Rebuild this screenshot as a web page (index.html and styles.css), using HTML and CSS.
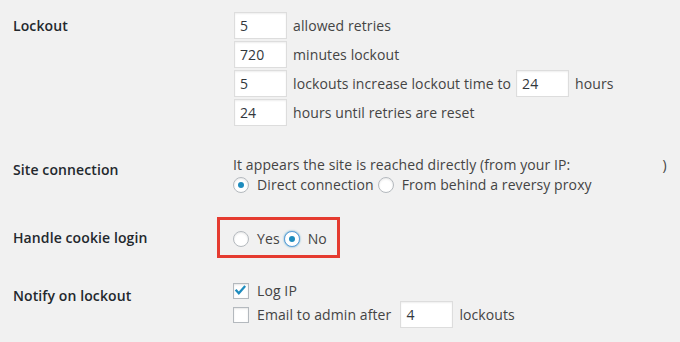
FILE: index.html
```html
<!DOCTYPE html>
<html lang="en">
<head>
<meta charset="utf-8">
<title>Lockout settings</title>
<link rel="stylesheet" href="styles.css">
</head>
<body>
<div class="form">
  <div class="row row-lockout">
    <div class="label">Lockout</div>
    <div class="field">
      <div class="line tall"><input class="num" type="text" value="5"><span class="after">allowed retries</span></div>
      <div class="line tall"><input class="num" type="text" value="720"><span class="after">minutes lockout</span></div>
      <div class="line tall"><input class="num" type="text" value="5"><span class="after before">lockouts increase lockout time to</span><input class="num" type="text" value="24"><span class="after">hours</span></div>
      <div class="line tall"><input class="num" type="text" value="24"><span class="after">hours until retries are reset</span></div>
    </div>
  </div>

  <div class="row row-site">
    <div class="label">Site connection</div>
    <div class="field">
      <div class="line">It appears the site is reached directly (from your IP:<span class="ip"></span>)</div>
      <div class="line">
        <label class="opt"><input type="radio" name="conn" checked><span>Direct connection</span></label>
        <label class="opt"><input type="radio" name="conn"><span>From behind a reversy proxy</span></label>
      </div>
    </div>
  </div>

  <div class="row row-cookie">
    <div class="label">Handle cookie login</div>
    <div class="field">
      <div class="highlight">
        <label class="opt"><input type="radio" name="cookie"><span>Yes</span></label>
        <label class="opt"><input type="radio" name="cookie" class="focus" checked><span>No</span></label>
      </div>
    </div>
  </div>

  <div class="row row-notify">
    <div class="label">Notify on lockout</div>
    <div class="field">
      <div class="line">
        <label class="opt"><span class="check"><svg viewBox="0 0 16 16" width="16" height="16"><path d="M3.6 7.6 L6.2 10.4 L12.2 3.6" fill="none" stroke="#1e8cbe" stroke-width="2.4" stroke-linecap="square"/></svg></span><span>Log IP</span></label>
      </div>
      <div class="line tall">
        <label class="opt"><span class="check"></span><span class="before">Email to admin after</span></label><input class="num" type="text" value="4"><span class="after">lockouts</span>
      </div>
    </div>
  </div>
</div>
</body>
</html>
```

FILE: styles.css
```css
html, body {
  margin: 0;
  background: #f1f1f1;
}

body {
  font-family: "Open Sans", "Liberation Sans", sans-serif;
  font-size: 14px;
  line-height: 20px;
  letter-spacing: 0.1px;
  color: #444;
}

.form {
  padding-left: 13px;
}

.row {
  display: grid;
  grid-template-columns: 220px 1fr;
}

.label {
  color: #23282d;
  font-weight: 600;
  padding-top: 5px;
}

.row-lockout { margin-top: 12px; }
.row-lockout .label { padding-top: 4px; }
.row-site { margin-top: 29px; }
.row-cookie { margin-top: 22px; }
.row-cookie .label { padding-top: 11px; }
.row-notify { margin-top: 23px; }

.line {
  display: flex;
  align-items: center;
  height: 20px;
  white-space: nowrap;
}

.line.tall {
  height: 27px;
}

.row-lockout .line + .line {
  margin-top: 2px;
}

.num {
  box-sizing: border-box;
  width: 53px;
  height: 27px;
  margin: 0 0 0 1px;
  padding: 0 5px;
  border: 1px solid #ddd;
  box-shadow: inset 0 1px 2px rgba(0, 0, 0, 0.07);
  background: #fff;
  color: #32373c;
  font-family: "Open Sans", "Liberation Sans", sans-serif;
  font-size: 14px;
  letter-spacing: 0.1px;
  outline: none;
}

.after { margin-left: 6px; }
.before { margin-right: 4px; }

.ip {
  display: inline-block;
  width: 92px;
}

.opt {
  display: inline-flex;
  align-items: center;
  margin-right: 4px;
}

.opt input[type="radio"] {
  -webkit-appearance: none;
  appearance: none;
  position: relative;
  box-sizing: border-box;
  flex: none;
  width: 16px;
  height: 16px;
  margin: 0 8px 0 0;
  border: 1px solid #b4b9be;
  border-radius: 50%;
  background: #fff;
  box-shadow: inset 0 1px 2px rgba(0, 0, 0, 0.1);
}

.opt input[type="radio"]:checked::before {
  content: "";
  position: absolute;
  left: 4px;
  top: 4px;
  width: 6px;
  height: 6px;
  border-radius: 50%;
  background: #1e8cbe;
}

.opt input.focus {
  border-color: #5b9dd9;
  box-shadow: 0 0 2px rgba(30, 140, 190, 0.8);
}

.check {
  box-sizing: border-box;
  display: inline-flex;
  flex: none;
  width: 16px;
  height: 16px;
  margin-right: 8px;
  border: 1px solid #b4b9be;
  background: #fff;
  box-shadow: inset 0 1px 2px rgba(0, 0, 0, 0.1);
}

.check svg {
  margin: -1px 0 0 -1px;
}

.highlight {
  box-sizing: border-box;
  display: flex;
  align-items: center;
  width: 123px;
  margin-left: -16px;
  padding: 9px 0 6px 13px;
  border: 3px solid #e53b30;
}

.highlight .opt {
  height: 20px;
}
```
